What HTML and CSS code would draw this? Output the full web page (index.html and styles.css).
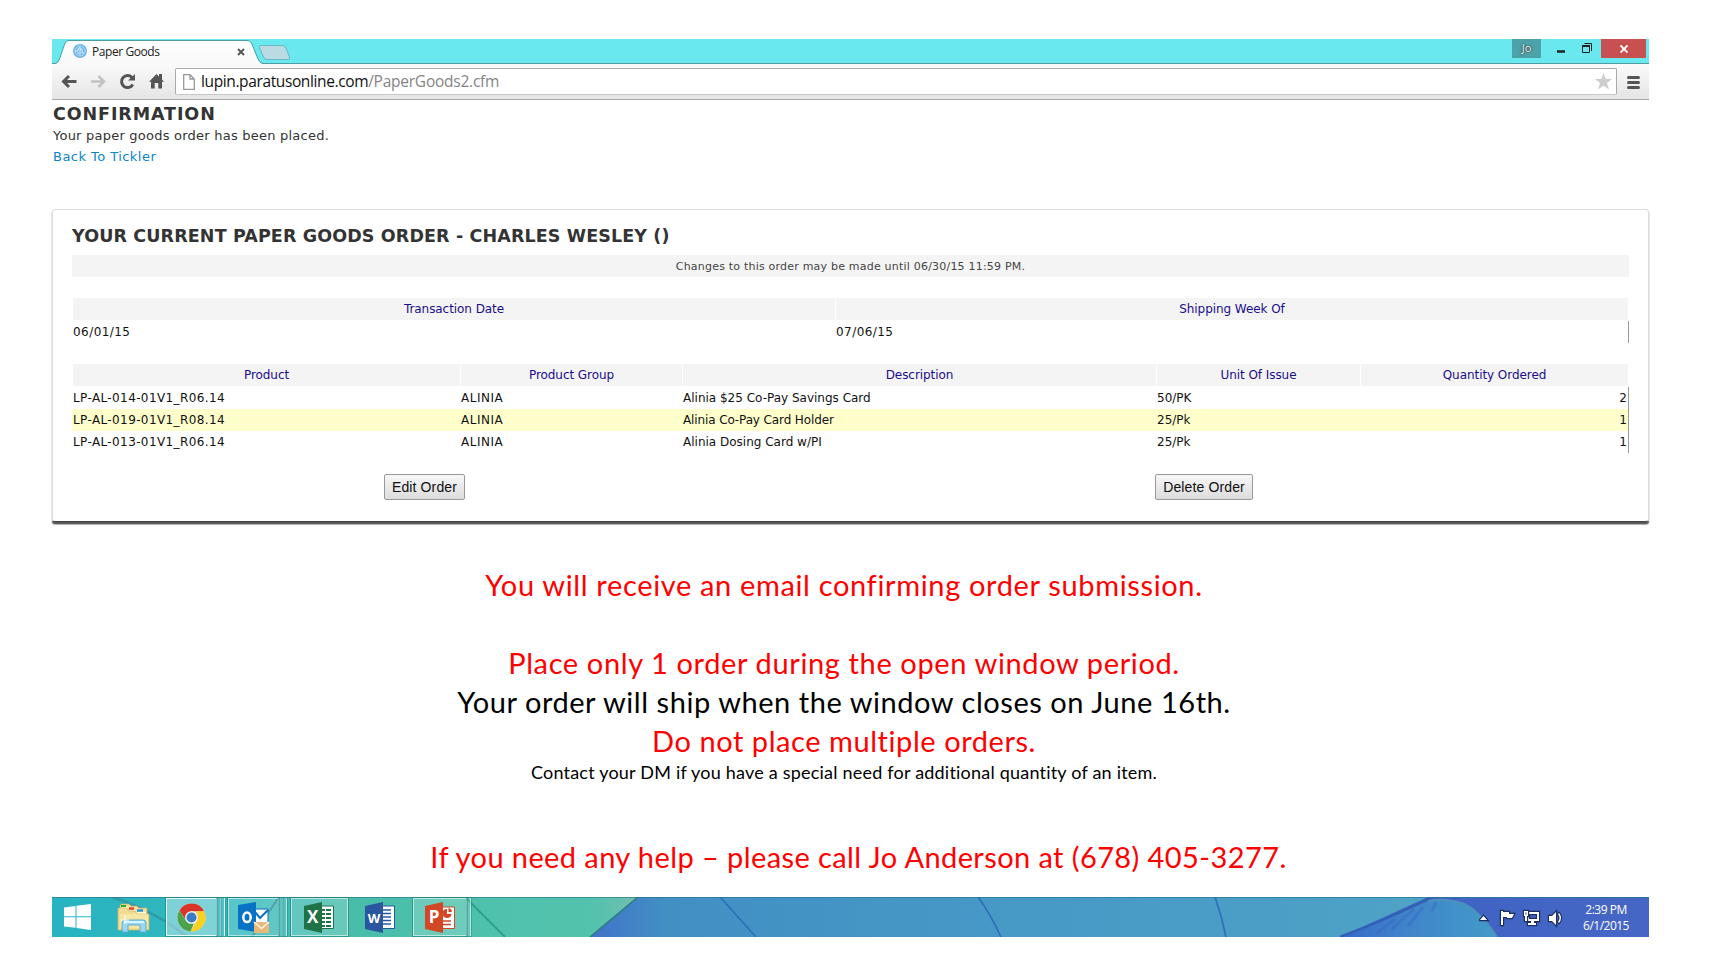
FILE: index.html
```
<!DOCTYPE html>
<html lang="en">
<head>
<meta charset="utf-8">
<title>Paper Goods</title>
<link rel="stylesheet" href="styles.css">
</head>
<body>
<div class="screen">
  <header class="browser">
    <div class="tabstrip">
      <svg class="tab-shape" width="245" height="25" viewBox="0 0 245 25">
        <defs><linearGradient id="tabfill" x2="0" y2="1"><stop offset="0" stop-color="#fff"/><stop offset="1" stop-color="#f9f9f9"/></linearGradient></defs>
        <path d="M3 25V24.500Q6 24.500 7.500 20L13 4Q14.500 1.500 17 1.500H195Q198 1.500 199.500 4L206 20Q208 24.500 211 24.500V25Z" fill="url(#tabfill)"/>
        <path d="M0 24.500H3Q6 24.500 7.500 20L13 4Q14.500 1.500 17 1.500H195Q198 1.500 199.500 4L206 20Q208 24.500 211 24.500H245" fill="none" stroke="#4c9ea3"/>
        <path d="M208 6.500H230Q233 6.500 234 9L237.500 18Q238 20.500 236 20.500H215Q212.500 20.500 211.500 18L207.500 8.500Q207 6.500 208 6.500Z" fill="#badbe1" stroke="#68b9c1"/>
      </svg>
      <div class="tab">
        <svg width="14" height="14" viewBox="0 0 14 14"><circle cx="7" cy="7" r="7" fill="#68b5e6"/><circle cx="7" cy="7" r="5" fill="none" stroke="#b7ddf3"/><path d="M2 7H5V5L7 3V11M7 5H9V9H11M4 9H6" fill="none" stroke="#e2f2fb"/></svg>
        <span class="tab-title">Paper Goods</span>
        <svg class="tab-close" width="8" height="8" viewBox="0 0 8 8"><path d="M1 1L7 7M7 1L1 7" stroke="#555" stroke-width="1.900"/></svg>
      </div>
      <div class="window-controls">
        <span class="user">Jo</span>
        <svg width="60" height="19" viewBox="0 0 60 19"><path d="M16 12.500H24" stroke="#222" stroke-width="2.500"/><path d="M43.500 4.500H50.500V12" fill="none" stroke="#222"/><path d="M41.500 6.500H48.500V13.500H41.500Z" fill="none" stroke="#222"/><path d="M41 7H49" stroke="#222" stroke-width="2"/></svg>
        <span class="close"><svg width="8" height="8" viewBox="0 0 8 8"><path d="M.5 .5L7.500 7.500M7.500 .5L.5 7.500" stroke="#fff" stroke-width="1.900"/></svg></span>
      </div>
    </div>
    <div class="toolbar">
      <svg class="nav" width="112" height="20" viewBox="0 0 112 20">
        <path d="M17.500 9.500H4.500M10 4L4.500 9.500L10 15" fill="none" stroke="#555" stroke-width="3"/>
        <path d="M32 9.500H45M39.500 4L45 9.500L39.500 15" fill="none" stroke="#c2c2c2" stroke-width="2.500"/>
        <path d="M73 5.500A6 6 0 1 0 73.800 12.500" fill="none" stroke="#555" stroke-width="3"/><path d="M69 8.500H76V2Z" fill="#555"/>
        <path d="M90 9.800L97.500 2L100 4.500V2H103V7.600L105 9.800H103V16.500H99.300V11H95.700V16.500H92V9.800Z" fill="#555"/>
      </svg>
      <div class="omnibox">
        <svg class="page-icon" width="12" height="16" viewBox="0 0 12 16"><path d="M.7.7H7L11.300 5V15.300H.7ZM7 .7V5H11.300" fill="#fff" stroke="#999" stroke-width="1.300"/></svg>
        <span class="url"><span class="host">lupin.paratusonline.com</span><span class="path">/PaperGoods2.cfm</span></span>
        <svg class="star" width="17" height="17" viewBox="0 0 17 17"><path d="M8.500 0L10.800 6H17L12 10L14 16.500L8.500 12.700L3 16.500L5 10L0 6H6.200Z" fill="#cecece"/></svg>
      </div>
      <svg class="menu" width="13" height="13" viewBox="0 0 13 13"><path d="M1.500 1.500H11.500M1.500 6.500H11.500M1.500 11.500H11.500" stroke="#555" stroke-width="3" stroke-linecap="round"/></svg>
    </div>
  </header>

  <main>
    <section class="intro">
      <h1>CONFIRMATION</h1>
      <p>Your paper goods order has been placed.</p>
      <a href="#">Back To Tickler</a>
    </section>

    <section class="panel">
      <h2>YOUR CURRENT PAPER GOODS ORDER - CHARLES WESLEY ()</h2>
      <div class="notice">Changes to this order may be made until 06/30/15 11:59 PM.</div>

      <div class="table dates">
        <div class="row head"><span>Transaction Date</span><span>Shipping Week Of</span></div>
        <div class="row lead"><span class="digits">06/01/15</span><span class="digits">07/06/15</span></div>
      </div>

      <div class="table products">
        <div class="row head"><span>Product</span><span>Product Group</span><span>Description</span><span>Unit Of Issue</span><span>Quantity Ordered</span></div>
        <div class="row lead"><span class="code">LP-AL-014-01V1_R06.14</span><span class="group">ALINIA</span><span>Alinia $25 Co-Pay Savings Card</span><span>50/PK</span><span class="qty">2</span></div>
        <div class="row alt"><span class="code">LP-AL-019-01V1_R08.14</span><span class="group">ALINIA</span><span class="holder">Alinia Co-Pay Card Holder</span><span>25/Pk</span><span class="qty">1</span></div>
        <div class="row"><span class="code">LP-AL-013-01V1_R06.14</span><span class="group">ALINIA</span><span>Alinia Dosing Card w/PI</span><span>25/Pk</span><span class="qty">1</span></div>
      </div>

      <div class="actions"><button class="edit">Edit Order</button><button class="delete">Delete Order</button></div>
    </section>

    <section class="message">
      <p class="receive">You will receive an email confirming order submission.</p>
      <p class="only">Place only 1 order during the open window period.</p>
      <p class="ship">Your order will ship when the window closes on June 16th.</p>
      <p class="multiple">Do not place multiple orders.</p>
      <p class="contact">Contact your DM if you have a special need for additional quantity of an item.</p>
      <p class="help">If you need any help – please call Jo Anderson at (678) 405-3277.</p>
    </section>
  </main>

  <footer class="taskbar">
    <svg class="wallpaper" width="1597" height="40" viewBox="0 0 1597 40">
      <defs>
        <linearGradient id="green"><stop offset="0" stop-color="#27b3c2"/><stop offset=".33" stop-color="#35b9bd"/><stop offset=".5" stop-color="#47bda9"/><stop offset=".8" stop-color="#50c2ad"/><stop offset=".93" stop-color="#54c2ad"/><stop offset="1" stop-color="#75bfb0"/></linearGradient>
        <linearGradient id="blue"><stop offset="0" stop-color="#4073c8"/><stop offset=".07" stop-color="#428fc4"/><stop offset=".4" stop-color="#4799c6"/><stop offset="1" stop-color="#51a8c6"/></linearGradient>
        <linearGradient id="petal"><stop offset="0" stop-color="#356ac6"/><stop offset=".4" stop-color="#4083ca"/><stop offset="1" stop-color="#429bc9"/></linearGradient>
        <linearGradient id="right"><stop offset="0" stop-color="#4075bd"/><stop offset=".35" stop-color="#4064c4"/><stop offset="1" stop-color="#4666c5"/></linearGradient>
      </defs>
      <path d="M0 0H586L538 40H0Z" fill="url(#green)"/>
      <path d="M586 0H1597V40H538Z" fill="url(#blue)"/>
      <path d="M586 0L538 40" stroke="#297c80" stroke-width="1.500"/>
      <path d="M60 0Q105 15 135 40" fill="none" stroke="#328fa0" stroke-width="2.500" opacity=".7"/>
      <path d="M227 0L200 40" stroke="#28808c" stroke-width="2" opacity=".8"/>
      <path d="M413 0L453 40" stroke="#2b9f87" stroke-width="1.800"/>
      <path d="M668 0L704 40M926 0Q939 18 949 40M1163 0Q1170 20 1174 40" fill="none" stroke="#2f70b9" stroke-width="1.800"/>
      <path d="M1376 0H1597V40H1288Z" fill="url(#right)"/>
      <path d="M1288 40Q1330 25 1376 4Q1400 0 1418 10Q1434 22 1445 40Z" fill="url(#petal)"/>
      <path d="M1376 4Q1400 0 1418 10Q1434 22 1445 40" fill="none" stroke="#4f91bd" stroke-width="2"/>
      <path d="M1288 40Q1336 22 1378 1" fill="none" stroke="#3160b6" stroke-width="2.500"/>
      <path d="M1340 32L1362 12M1356 29L1371 10M1324 37L1343 22M1380 14L1384 5" stroke="#3566c6" stroke-width="3" opacity=".45"/>
      <path d="M0 .5H1597" stroke="#28758e" opacity=".65"/>
    </svg>

    <svg class="start" width="27" height="26" viewBox="0 0 27 26"><path d="M0 3.500L11.500 2V12.300H0ZM12.500 1.800L27 0V12.300H12.500ZM0 13.300H11.500V23.800L0 22.500ZM12.500 13.300H27V26L12.500 24Z" fill="#fff"/></svg>

    <svg class="folder" width="33" height="30" viewBox="0 0 33 30">
      <path d="M3 5V2L5 1H12L14 3H20L22 5H30V16H3Z" fill="#f3e0a0" stroke="#c5a65a" stroke-width=".7"/>
      <path d="M4 2H9V4H4Z" fill="#18b52b"/><path d="M12 4.500H17V6.500H12Z" fill="#d84931"/><path d="M20 6.500H26V8.500H20Z" fill="#2595dc"/>
      <path d="M5 4H10V7H18V9H29V12H5Z" fill="#fff9d8"/>
      <path d="M1 6Q1 5 2 5H9L12 8H18L20 11H31Q32 11 32 12V27H1Z" fill="#f2dc91" stroke="#d2b260" stroke-width=".7"/>
      <path d="M4 2H9V4H4Z" fill="#18b52b"/><path d="M12 4.500H17V6.500H12Z" fill="#d84931"/><path d="M20 6.500H26V8.500H20Z" fill="#2595dc"/>
      <path d="M3 11H31V25H3Z" fill="#f9e9ad" opacity=".65"/>
      <path d="M5 29V20Q5 17 8 17H26Q29 17 29 20V29H23V22H11V29Z" fill="#9bd7ed" stroke="#5daed4"/>
      <path d="M7 19H27" stroke="#d8f5fd" stroke-width="2"/><path d="M8 12V21M4 17H12" stroke="#fff"/>
    </svg>

    <div class="task chrome"><div class="face">
      <svg width="29" height="29" viewBox="0 0 30 30"><circle cx="15" cy="15" r="14.500" fill="#ddd"/><path d="M2.600 7.500A14.500 14.500 0 0 1 28 8.500H15A6.500 6.500 0 0 0 8.800 17Z" fill="#da3429"/><path d="M28 8.500A14.500 14.500 0 0 1 14 29.500L20.700 18.200Q23 13 19 8.500Z" fill="#fcd020"/><path d="M2.600 7.500L9.400 18.500Q12 22 17.500 21L14 29.500A14.500 14.500 0 0 1 2.600 7.500Z" fill="#4ba34b"/><circle cx="15" cy="15" r="6.500" fill="#f4f4f4"/><circle cx="15" cy="15" r="5.200" fill="#397cc5"/></svg>
    </div><i></i><i></i></div>

    <div class="task outlook"><div class="face">
      <svg width="32" height="31" viewBox="0 0 32 31"><path d="M17 7H30V22H17Z" fill="#fff" stroke="#0b70c0"/><path d="M17 10L22 16L30 8" fill="none" stroke="#0b70c0" stroke-width="2"/><path d="M0 3L18 0V30L0 27Z" fill="#0873c5"/><ellipse cx="9" cy="15.300" rx="3.700" ry="4.800" fill="none" stroke="#fff" stroke-width="2.500"/><path d="M16 20H31V31H16Z" fill="#e9b778"/><path d="M16 20L23.500 26.500L31 20" fill="none" stroke="#fff6e8" stroke-width="1.500"/></svg>
    </div><i></i><i></i></div>

    <div class="task excel"><div class="face">
      <svg width="31" height="31" viewBox="0 0 31 31"><path d="M17 4H29.500V26.500H17Z" fill="#fff" stroke="#207346"/><path d="M18 8H27M18 12H27M18 16H27M18 20H27M18 24H27" stroke="#207346" stroke-width="2.200"/><path d="M21.500 6V26" stroke="#fff"/><path d="M0 4L18 0V31L0 27Z" fill="#207346"/><text x="8.700" y="21" class="letter">X</text></svg>
    </div></div>

    <svg class="word" width="31" height="31" viewBox="0 0 31 31"><path d="M17 4H29.500V26.500H17Z" fill="#fff" stroke="#2b579a"/><path d="M18 8H26M18 11.500H26M18 15H26M18 18.500H26M18 22H26" stroke="#2b579a" stroke-width="1.300"/><path d="M0 4L18 0V31L0 27Z" fill="#2a569f"/><text x="9" y="20.500" class="letter narrow">W</text></svg>

    <div class="task powerpoint"><div class="face">
      <svg width="31" height="31" viewBox="0 0 31 31"><path d="M17 5H29.500V26.500H17Z" fill="#fff" stroke="#d24726"/><path d="M22 7A4.500 4.500 0 1 0 26.500 12H22Z" fill="#d24726"/><path d="M23.500 6A4.500 4.500 0 0 1 27 10H23.500Z" fill="#d24726"/><path d="M18 19H26M18 22.500H26" stroke="#d24726" stroke-width="1.500"/><path d="M0 4L18 0V31L0 27Z" fill="#d24726"/><text x="9" y="21" class="letter">P</text></svg>
    </div><i></i></div>

    <svg class="tray" width="84" height="20" viewBox="0 0 84 20">
      <g stroke="#1f2e61" stroke-width="2.400" fill="#fff" paint-order="stroke">
        <path d="M1 12L4.500 8L8 12Z"/>
        <path d="M22 3H24V17H22ZM24 4H30V6H35L33 10H28V9H24Z"/>
        <path d="M48 4H60V13H55V15H57V17H49V15H52V13H48ZM50 6V11H58V6Z" fill-rule="evenodd"/>
        <path d="M45 3H49V8H48V13H46V8H45Z"/>
        <path d="M70 8H73L77 4V17L73 13H70ZM79 6Q82 10 79 14L80 15Q84 10 80 5Z"/>
      </g>
      <path d="M46.500 4.500H47.500V6.500H46.500Z" fill="#1f2e61"/>
    </svg>
    <div class="clock"><span>2:39 PM</span><span>6/1/2015</span></div>
  </footer>
</div>
</body>
</html>
```
FILE: styles.css
```
* { box-sizing: border-box; }
body { margin: 0; background: #fff; font-family: "DejaVu Sans", Verdana, sans-serif; }
h1, h2, p { margin: 0; }
svg { display: block; flex: none; }
.screen { width: 1734px; height: 975px; padding: 39px 85px 0 52px; overflow: hidden; }

.tabstrip { position: relative; height: 25px; display: flex; justify-content: space-between; background: #69e8ef; border-bottom: 1px solid #4c9ea3; }
.tab-shape { position: absolute; left: 0; top: 0; }
.tab { position: relative; display: flex; align-items: center; height: 24px; padding-left: 21px; }
.tab-title { margin-left: 5px; width: 145px; padding-top: 1px; font: 12px/25px "Open Sans", sans-serif; letter-spacing: -.42px; color: #222; }
.tab-close { margin-top: 1px; }
.window-controls { display: flex; height: 19px; margin-right: 3px; }
.user { width: 29px; background: #4ba2a9; color: #fff; font: 11px/18px "Open Sans", sans-serif; text-align: center; text-shadow: 0 0 2px #222, 0 0 1px #222; }
.close { width: 45px; display: flex; align-items: center; justify-content: center; background: #c75050; }
.toolbar { height: 36px; display: flex; align-items: flex-start; background: linear-gradient(#fafafa, #e5e5e5); border-bottom: 1px solid #a6a6a6; }
.nav { margin: 8px 0 0 7px; }
.omnibox { display: flex; align-items: center; width: 1442px; height: 27px; margin: 4px 0 0 4px; padding: 0 4px 0 7px; background: #fff; border: 1px solid #aaa; border-bottom-color: #c6c6c6; border-radius: 2px; }
.url { flex: 1; margin-left: 6px; padding-bottom: 2px; font: 15.500px/24px "Open Sans", sans-serif; white-space: nowrap; }
.host { color: #111; letter-spacing: -.38px; }
.path { color: #858585; letter-spacing: -.24px; }
.menu { margin: 12px 0 0 10px; }

.intro { height: 109px; padding: 1px 0 0 1px; color: #333; font-size: 13px; }
.intro h1 { font-size: 17.500px; line-height: 26px; letter-spacing: .9px; }
.intro p { line-height: 17px; letter-spacing: .23px; }
.intro a { display: block; line-height: 25px; letter-spacing: .46px; color: #0b84cc; text-decoration: none; }

.panel { height: 313px; padding: 0 19px; border: 1px solid #ddd; border-bottom-color: #444; border-radius: 3px; box-shadow: 0 2px 1px #555, 0 3px 1px #bbb; }
.panel h2 { height: 45px; padding-top: 7px; font-size: 17.500px; line-height: 39px; letter-spacing: .12px; color: #333; }
.notice { height: 22px; background: #f4f4f4; color: #444; font-size: 11px; line-height: 23px; letter-spacing: .21px; text-align: center; }
.table { margin-top: 21px; font-size: 12px; line-height: 22px; color: #111; }
.row { display: grid; height: 22px; padding-left: 1px; border-right: 1px solid #999; }
.dates .row { grid-template-columns: 763px 1fr; }
.products .row { grid-template-columns: 388px 222px 474px 204px 1fr; }
.row.head { color: #1a0d8c; text-align: center; border-right-color: transparent; }
.head span { background: #f4f4f4; border-right: 1px solid #fff; letter-spacing: -.06px; }
.head span:last-child { border-right: 0; }
.row.lead { margin-top: 1px; }
.alt { background: #ffffcb; }
.digits { letter-spacing: .44px; }
.code { letter-spacing: .39px; }
.group { letter-spacing: .5px; }
.holder { letter-spacing: -.12px; }
.row .qty { text-align: right; padding-right: 1px; }
.actions { display: flex; gap: 690px; padding: 21px 0 0 312px; }
.actions button { height: 26px; padding: 0; border: 1px solid #999; border-radius: 2px; background: linear-gradient(#f7f7f7, #dcdcdc); color: #111; font: 14px "Liberation Sans", Arial, sans-serif; letter-spacing: .13px; }
.edit { width: 81px; }
.delete { width: 98px; }

.message { height: 375px; padding: 43px 13px 0 0; text-align: center; font: 29px/39px Lato, sans-serif; color: #f00; white-space: nowrap; }
.receive { margin-bottom: 39px; letter-spacing: .65px; }
.only { letter-spacing: .62px; }
.ship { color: #000; letter-spacing: .55px; }
.multiple { letter-spacing: .56px; }
.contact { color: #000; font-size: 18px; line-height: 24px; letter-spacing: .21px; }
.help { margin-top: 53px; padding-left: 29px; letter-spacing: .41px; }

.taskbar { position: relative; height: 40px; display: flex; }
.wallpaper { position: absolute; left: 0; top: 0; }
.taskbar > :not(.wallpaper) { position: relative; }
.start { margin: 7px 0 0 12px; }
.folder { margin: 6px 0 0 26px; }
.task { display: flex; height: 40px; margin-left: 1px; }
.face { display: flex; align-items: center; justify-content: center; border: 1px solid #ffffff8c; outline: 1px solid #257f7fa0; outline-offset: 0; background: #ffffff30; margin: 1px 0; height: 38px; }
.task i { width: 4px; height: 38px; margin-top: 1px; border-right: 1px solid #ffffff8c; outline: 1px solid #257f7f70; background: #ffffff25; }
.chrome { margin-left: 16px; }
.chrome .face { width: 51px; border-color: #e5ffff; background: #ffffff60; }
.chrome i { border-color: #e5ffff; }
.outlook { margin-left: 3px; }
.outlook .face { width: 51px; }
.excel { margin-left: 4px; }
.excel .face { width: 57px; }
.word { margin: 5px 0 0 17px; }
.powerpoint { margin-left: 17px; }
.powerpoint .face { width: 54px; }
.letter { font: bold 17px "Open Sans", sans-serif; fill: #fff; text-anchor: middle; }
.narrow { font-size: 13px; }
.tray { margin: 11px 0 0 auto; }
.clock { display: flex; flex-direction: column; width: 86px; padding-top: 5px; align-items: center; color: #fff; font: 12px/16px "Open Sans", sans-serif; letter-spacing: -.5px; }
```
